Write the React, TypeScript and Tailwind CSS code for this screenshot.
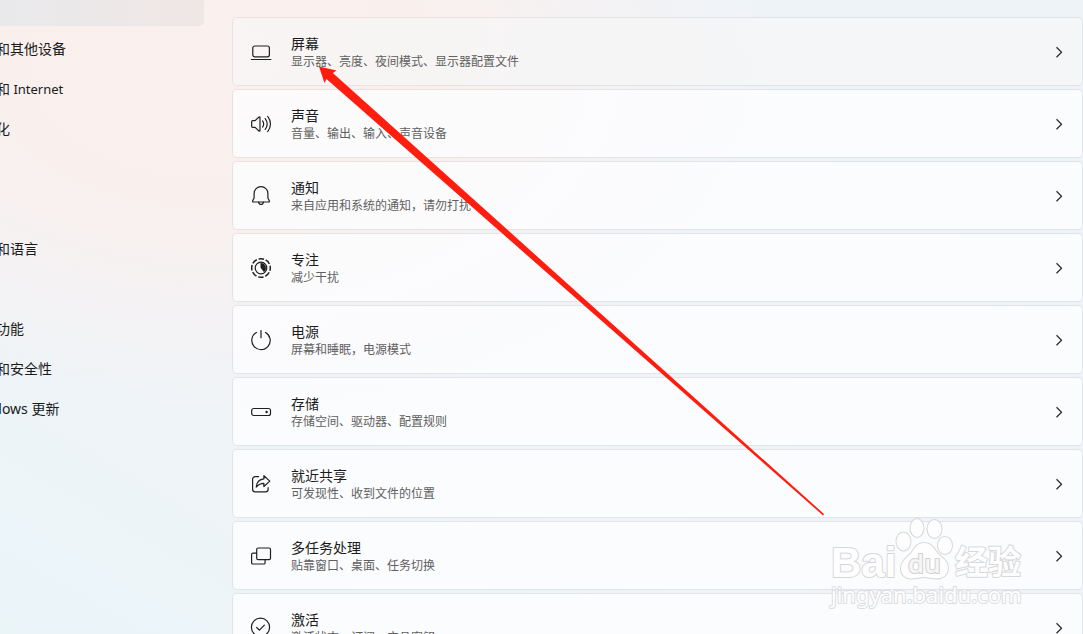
import type { ReactNode } from "react"

const navItems = [
  { id: 1, label: "蓝牙和其他设备" },
  { id: 2, label: "网络和", latin: " Internet" },
  { id: 3, label: "个性化" },
  { id: 4 },
  { id: 5 },
  { id: 6, label: "时间和语言" },
  { id: 7 },
  { id: 8, label: "辅助功能" },
  { id: 9, label: "隐私和安全性" },
  { id: 10, label: "更新", prefix: "Windows " },
]

interface ISetting {
  id: number
  title: string
  text: string
  icon: ReactNode
}

const settings: ISetting[] = [
  {
    id: 1,
    title: "屏幕",
    text: "显示器、亮度、夜间模式、显示器配置文件",
    icon: (
      <>
        <rect x="1.8" y="4" width="16.6" height="10.8" rx="2" />
        <path d="M.3 17.500h19.600" />
      </>
    ),
  },
  {
    id: 2,
    title: "声音",
    text: "音量、输出、输入、声音设备",
    icon: (
      <>
        <path d="M.7 7.6c0-.6.4-1 1-1h2.4L8 3c.4-.4 1-.1 1 .5v13c0 .6-.6.9-1 .5l-3.900-3.600H1.700c-.6 0-1-.4-1-1z" />
        <path d="M11.600 6.900c1.300 1.900 1.300 4.300 0 6.200M14.200 4.600c2.400 3.200 2.400 7.600 0 10.800M16.700 2.400c3.700 4.600 3.700 10.600 0 15.200" />
      </>
    ),
  },
  {
    id: 3,
    title: "通知",
    text: "来自应用和系统的通知，请勿打扰",
    icon: (
      <>
        <path d="M10 .7c-3.900 0-6.900 3-6.900 6.900v4.300L1.600 15.100c-.2.500.1.900.6.900h15.600c.5 0 .8-.4.6-.9l-1.500-3.200V7.600c0-3.900-3-6.900-6.900-6.900z" />
        <path d="M7.600 16.200c.2 1.400 1.100 2.300 2.400 2.300s2.200-.9 2.400-2.300" />
      </>
    ),
  },
  {
    id: 4,
    title: "专注",
    text: "减少干扰",
    icon: (
      <>
        <circle cx="10" cy="10" r="9.300" strokeWidth="1.500" strokeLinecap="butt" strokeDasharray="5.500 1.804" strokeDashoffset="2.700" />
        <circle cx="10" cy="10" r="5.800" strokeWidth="1.200" />
        <path d="M10 5.200a4.800 4.800 0 0 1 3 8.500L10 10z" fill="currentColor" strokeWidth=".6" />
      </>
    ),
  },
  {
    id: 5,
    title: "电源",
    text: "屏幕和睡眠，电源模式",
    icon: (
      <>
        <path d="M10 .5v7.200" />
        <path d="M5.400 2.400a9.200 9.200 0 1 0 9.200 0" />
      </>
    ),
  },
  {
    id: 6,
    title: "存储",
    text: "存储空间、驱动器、配置规则",
    icon: (
      <>
        <rect x=".7" y="6.500" width="18.800" height="7" rx="2" />
        <circle cx="15.600" cy="10" r=".6" fill="currentColor" />
      </>
    ),
  },
  {
    id: 7,
    title: "就近共享",
    text: "可发现性、收到文件的位置",
    icon: (
      <>
        <path d="M7.600 2.600H4.200c-1.500 0-2.600 1.100-2.600 2.600v10.100c0 1.500 1.100 2.600 2.600 2.600h10.300c1.500 0 2.600-1.100 2.600-2.600v-1.600" />
        <path d="M12.900 1.700l5.900 5.400-5.900 5.400V9.400c-3.200 0-5.400 1-7.700 3.600.5-4.900 3-7.800 7.700-8.200z" />
      </>
    ),
  },
  {
    id: 8,
    title: "多任务处理",
    text: "贴靠窗口、桌面、任务切换",
    icon: (
      <>
        <rect x="5.700" y="2" width="13.800" height="11.600" rx="1.400" />
        <path d="M5.500 7.100H1.900c-.8 0-1.300.5-1.300 1.300v8.300c0 .8.500 1.300 1.300 1.300h10.900c.8 0 1.300-.5 1.300-1.300v-2.900" />
      </>
    ),
  },
  {
    id: 9,
    title: "激活",
    text: "激活状态、订阅、产品密钥",
    icon: (
      <>
        <circle cx="9.500" cy="9.300" r="9.100" />
        <path d="M5.700 9.500l2.700 2.700 5-5" />
      </>
    ),
  },
]

function SettingCard({ item, active }: { item: ISetting; active: boolean }) {
  return (
    <a
      href="#"
      className={`flex h-[69px] shrink-0 items-center gap-5 rounded-[5px] border border-black/6 bg-clip-padding pl-[18px] pr-[15px] ${
        active ? "bg-[#f6f7f7]/70" : "bg-[#fdfdfe]/85"
      }`}
    >
      <svg
        viewBox="0 0 20 20"
        className="size-5 shrink-0 overflow-visible text-[#1f1f1f]"
        fill="none"
        stroke="currentColor"
        strokeWidth="1.200"
        strokeLinecap="round"
        strokeLinejoin="round"
      >
        {item.icon}
      </svg>
      <div className="flex-1 pb-0.5">
        <h2 className="text-[14px] leading-5 text-[#1b1b1b]">{item.title}</h2>
        <p className="text-[12px] leading-4 text-[#606060]">{item.text}</p>
      </div>
      <svg viewBox="0 0 16 16" className="size-4 shrink-0 text-[#303030]" fill="none" stroke="currentColor" strokeWidth="1.300">
        <path d="M5.500 3.200l5 5-5 5" />
      </svg>
    </a>
  )
}

function Watermark() {
  return (
    <svg
      viewBox="0 0 200 96"
      className="pointer-events-none absolute right-[58px] bottom-[22px] h-[96px] w-[200px]"
      fill="#fefefe"
      stroke="#d6d7d9"
      strokeWidth="2"
      strokeLinejoin="round"
      paintOrder="stroke"
    >
      <text x="6" y="61" fontSize="42" fontWeight="700" fontFamily="'Liberation Sans', sans-serif">
        Bai
      </text>
      <ellipse cx="78.500" cy="25.500" rx="7" ry="9" />
      <ellipse cx="92" cy="12" rx="6.500" ry="9" />
      <ellipse cx="109.500" cy="13" rx="7" ry="9" />
      <ellipse cx="120" cy="29.500" rx="7" ry="8.500" />
      <path d="M99 27c-6 0-9 4-12 9-3 4.500-11 8-11 16.500 0 6 4 10 10 10 5 0 9-1.500 13-1.500s8 1.500 13 1.500c6 0 11-4 11-10.500 0-8-7-10-11-15.500-3.500-5-6-9.500-13-9.500z" />
      <text x="83" y="57" fontSize="26" fontWeight="600" fontFamily="'Open Sans', sans-serif" fill="#f6f6f7" stroke="#cfd0d2">
        du
      </text>
      <text x="130" y="58" fontSize="33" fontWeight="700" fontFamily="'Noto Sans CJK SC', sans-serif">
        经验
      </text>
      <text x="6" y="87" fontSize="22" stroke="#dcdde0" fontFamily="'Noto Sans', sans-serif">
        jingyan.baidu.com
      </text>
    </svg>
  )
}

export default function App() {
  return (
    <div className="relative flex h-screen overflow-hidden bg-[#eff3f7] bg-[radial-gradient(ellipse_560px_360px_at_210px_60px,#faf0ed_0%,#f9f0ee_40%,rgba(245,241,242,0.6)_75%,transparent_100%),linear-gradient(to_top_right,#eaf5f8_0%,#f0f3f7_35%,#eef3f8_100%)] font-['Noto_Sans_CJK_SC',sans-serif]">
      <nav className="w-[204px] shrink-0 overflow-hidden">
        <div className="h-[26px] rounded-br-[5px] bg-[linear-gradient(to_right,#e9e9ec,#f0e7e5)]" />
        <ul className="mt-1 -ml-8 flex flex-col gap-1">
          {navItems.map((item) => (
            <li key={item.id} className="h-9">
              {item.label && (
                <a href="#" className="block text-[14px] leading-9 whitespace-pre text-[#1b1b1b]">
                  {item.prefix && <span className="font-['Noto_Sans',sans-serif]">{item.prefix}</span>}
                  {item.label}
                  {item.latin && <span className="font-['Noto_Sans',sans-serif] text-[13px]">{item.latin}</span>}
                </a>
              )}
            </li>
          ))}
        </ul>
      </nav>

      <main className="ml-7 flex flex-1 flex-col gap-[3px] pt-[17px]">
        {settings.map((item) => (
          <SettingCard key={item.id} item={item} active={item.id === 1} />
        ))}
      </main>

      <Watermark />

      {/* Red pointer to the first row */}
      <svg viewBox="0 0 506 450" className="pointer-events-none absolute top-[66px] left-[319px] h-[450px] w-[506px]">
        <path d="M0 .5L17.500 4.500 13.800 7 505 448 504 449.400 7.500 13 5.500 17z" fill="#ff1d10" />
      </svg>
    </div>
  )
}
